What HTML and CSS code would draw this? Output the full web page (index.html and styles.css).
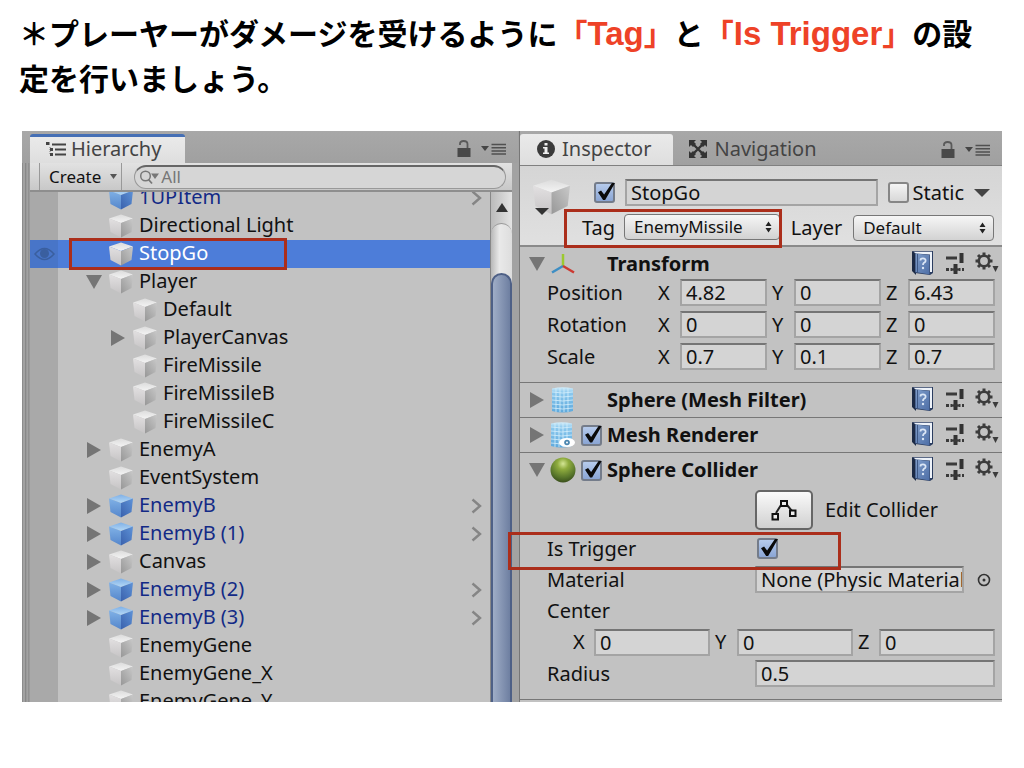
FILE: index.html
```html
<!DOCTYPE html>
<html lang="ja">
<head>
    <meta charset="UTF-8">
    <title>Tag / Is Trigger</title>
    <link rel="stylesheet" href="styles.css">
</head>
<body>
    <svg class="defs" width="0" height="0" aria-hidden="true">
        <defs>
            <linearGradient id="gTop" x1="0" y1="0" x2="0" y2="1"><stop offset="0" stop-color="#dcdcdc"/><stop offset="1" stop-color="#f4f4f4"/></linearGradient>
            <linearGradient id="gLeft" x1="0" y1="0" x2="0" y2="1"><stop offset="0" stop-color="#e2e0e1"/><stop offset="1" stop-color="#c6c4c5"/></linearGradient>
            <linearGradient id="gRight" x1="1" y1="0" x2="0" y2="1"><stop offset="0" stop-color="#c9c9c9"/><stop offset="1" stop-color="#979797"/></linearGradient>
            <linearGradient id="bTop" x1="0" y1="0" x2="0" y2="1"><stop offset="0" stop-color="#7fb0e6"/><stop offset="1" stop-color="#b4d8f6"/></linearGradient>
            <linearGradient id="bLeft" x1="0" y1="0" x2="0" y2="1"><stop offset="0" stop-color="#80b1e6"/><stop offset="1" stop-color="#5586cb"/></linearGradient>
            <linearGradient id="bRight" x1="1" y1="0" x2="0" y2="1"><stop offset="0" stop-color="#5e93d8"/><stop offset="1" stop-color="#3a61ac"/></linearGradient>
            <linearGradient id="gMesh" x1="0" y1="0" x2="0" y2="1"><stop offset="0" stop-color="#d2ecf9"/><stop offset=".2" stop-color="#8cc9ee"/><stop offset="1" stop-color="#5fa9dc"/></linearGradient>
            <linearGradient id="gBook" x1="0" y1="0" x2="1" y2="1"><stop offset="0" stop-color="#7f9dca"/><stop offset="1" stop-color="#4d6ea6"/></linearGradient>
            <radialGradient id="gBall" cx=".5" cy=".25" r=".75"><stop offset="0" stop-color="#d4e695"/><stop offset=".3" stop-color="#8fac3e"/><stop offset=".75" stop-color="#56742a"/><stop offset="1" stop-color="#3a4f1c"/></radialGradient>
        </defs>
        <symbol id="cube" viewBox="0 0 24 24">
            <path d="M0 4.500 12 0.500 24 4.500 12 9z" fill="url(#gTop)"/>
            <path d="M0 4.500 12 9V23.500L1.500 18z" fill="url(#gLeft)"/>
            <path d="M24 4.500 12 9V23.500L22.500 18z" fill="url(#gRight)"/>
        </symbol>
        <symbol id="prefab" viewBox="0 0 24 24">
            <path d="M0 4.500 12 0.500 24 4.500 12 9z" fill="url(#bTop)"/>
            <path d="M0 4.500 12 9V23.500L1.500 18z" fill="url(#bLeft)"/>
            <path d="M24 4.500 12 9V23.500L22.500 18z" fill="url(#bRight)"/>
        </symbol>
        <symbol id="closed" viewBox="0 0 14 16"><path d="M0 0 14 8 0 16z" fill="#757575"/></symbol>
        <symbol id="opened" viewBox="0 0 16 14"><path d="M0 0H16L8 14z" fill="#757575"/></symbol>
        <symbol id="chevron" viewBox="0 0 11 16"><path d="M1.500 1.500 9 8 1.500 14.500" fill="none" stroke="#858585" stroke-width="2.400"/></symbol>
        <symbol id="lock" viewBox="0 0 14 17">
            <path d="M0.500 8H13.500V17H0.500z" fill="#494949"/>
            <path d="M3 5V3.500Q3 1 6.500 1Q10.500 1 10.500 4V8" fill="none" stroke="#5a5a5a" stroke-width="1.800"/>
        </symbol>
        <symbol id="menu" viewBox="0 0 25 12">
            <path d="M0 3H8L4 8z" fill="#454545"/>
            <path d="M10.500 1.500H25M10.500 4.800H25M10.500 8H25M10.500 11H25" stroke="#505050" stroke-width="1.500"/>
        </symbol>
        <symbol id="updown" viewBox="0 0 7 12"><path d="M0.500 5 3.500 0.500 6.500 5zM0.500 7H6.500L3.500 11.500z" fill="#222"/></symbol>
        <symbol id="mesh" viewBox="0 0 22 26">
            <path d="M0 1.500Q11 -1 21 1.500V24Q11 27 0 24z" fill="url(#gMesh)"/>
            <path d="M4 1V25M8 1V25M12 1V25M16 1V25M0 5Q11 7 21 5M0 9Q11 11 21 9M0 13Q11 15 21 13M0 17Q11 19 21 17M0 21Q11 23 21 21" fill="none" stroke="#d5effb" stroke-width=".8"/>
        </symbol>
        <symbol id="book" viewBox="0 0 24 26">
            <path d="M1 1 5 3V25L1 21z" fill="#1c2a45"/>
            <path d="M1.500 1H22V23L19 25 4 23V4z" fill="#2b3d60"/>
            <path d="M2.500 1.800H21V22H19V4.500L5 3.500z" fill="#eef3fa"/>
            <path d="M4.500 3.500 18.500 5V24.500L4.500 22z" fill="url(#gBook)"/>
            <path d="M6.500 4V22" stroke="#3d5784" stroke-width="1"/>
            <path d="M9.500 10.500Q9.500 8.200 12 8.300 14.800 8.500 14.600 10.800 14.500 12 13 12.800 12 13.500 12 15" fill="none" stroke="#dbe6f5" stroke-width="1.800"/>
            <circle cx="12" cy="18" r="1.200" fill="#dbe6f5"/>
        </symbol>
        <symbol id="preset" viewBox="0 0 18 22">
            <path d="M0 6H11M0 17.500H3M4.500 17.500H6M13 17.500H14.500M16 17.500H18" stroke="#3a3a3a" stroke-width="2.800"/>
            <path d="M13.500 1H17.500V11H13.500zM7.500 12H11.500V22H7.500z" fill="#333"/>
            <path d="M5 17.500H13" stroke="#3a3a3a" stroke-width="2.400"/>
        </symbol>
        <symbol id="gear" viewBox="0 0 24 22">
            <circle cx="9" cy="9" r="5.200" fill="none" stroke="#3c3c3c" stroke-width="2.600"/>
            <path d="M9 .5V4M9 14V17.500M.5 9H4M14 9H17.500M3 3 5.500 5.500M12.500 12.500 15 15M15 3 12.500 5.500M5.500 12.500 3 15" stroke="#3c3c3c" stroke-width="3"/>
            <path d="M17.500 14H23.500L20.500 20z" fill="#3c3c3c"/>
        </symbol>
    </svg>

    <main class="slide">
        <h1>＊プレーヤーがダメージを受けるように<em>「<span>Tag</span>」</em>と<em>「<span>Is Trigger</span>」</em>の設定を行いましょう。</h1>

        <div class="editor">
            <section class="hierarchy">
                <header class="tab-bar">
                    <h2 class="tab tab-focus">
                        <svg class="list-icon" width="20" height="15" viewBox="0 0 20 15"><path d="M6 2.500H20M9 7.500H20M9 12.500H20" stroke="#444" stroke-width="2"/><path d="M4 5V13" stroke="#777" stroke-width="1" stroke-dasharray="1 1"/><path d="M0 0H3.500V3H0zM4 6H7V9H4zM4 11H7V14H4z" fill="#444"/></svg>
                        Hierarchy
                    </h2>
                    <div class="tab-tools">
                        <svg width="14" height="17"><use href="#lock"/></svg>
                        <svg width="25" height="12"><use href="#menu"/></svg>
                    </div>
                </header>
                <div class="toolbar">
                    <button class="create" type="button">Create <svg width="7" height="5" viewBox="0 0 7 5"><path d="M0 0H7L3.500 5z" fill="#555"/></svg></button>
                    <label class="search">
                        <svg width="22" height="16" viewBox="0 0 22 16"><circle cx="6.500" cy="7" r="4.800" fill="none" stroke="#777" stroke-width="1.500"/><path d="M9.500 10.500 13 14.500" stroke="#777" stroke-width="1.800"/><path d="M12 4.500H20L16 10z" fill="#777"/></svg>
                        <input type="text" aria-label="Search" placeholder="All">
                    </label>
                </div>
                <div class="tree-area">
                    <ul class="tree">
                        <li class="prefab"><i></i><svg class="cube"><use href="#prefab"/></svg><span>1UPItem</span><svg class="chevron"><use href="#chevron"/></svg></li>
                        <li><i></i><svg class="cube"><use href="#cube"/></svg><span>Directional Light</span></li>
                        <li class="selected"><svg class="eye" width="21" height="14" viewBox="0 0 21 14"><path d="M1 7Q10.500 -4 20 7Q10.500 18 1 7z" fill="none" stroke="#3a5f9f" stroke-width="1.500"/><circle cx="10.500" cy="6.500" r="4.500" fill="#3a5f9f"/></svg><i></i><svg class="cube"><use href="#cube"/></svg><span>StopGo</span></li>
                        <li><i><svg width="16" height="14"><use href="#opened"/></svg></i><svg class="cube"><use href="#cube"/></svg><span>Player</span></li>
                        <li class="child"><i></i><svg class="cube"><use href="#cube"/></svg><span>Default</span></li>
                        <li class="child"><i><svg width="14" height="16"><use href="#closed"/></svg></i><svg class="cube"><use href="#cube"/></svg><span>PlayerCanvas</span></li>
                        <li class="child"><i></i><svg class="cube"><use href="#cube"/></svg><span>FireMissile</span></li>
                        <li class="child"><i></i><svg class="cube"><use href="#cube"/></svg><span>FireMissileB</span></li>
                        <li class="child"><i></i><svg class="cube"><use href="#cube"/></svg><span>FireMissileC</span></li>
                        <li><i><svg width="14" height="16"><use href="#closed"/></svg></i><svg class="cube"><use href="#cube"/></svg><span>EnemyA</span></li>
                        <li><i></i><svg class="cube"><use href="#cube"/></svg><span>EventSystem</span></li>
                        <li class="prefab"><i><svg width="14" height="16"><use href="#closed"/></svg></i><svg class="cube"><use href="#prefab"/></svg><span>EnemyB</span><svg class="chevron"><use href="#chevron"/></svg></li>
                        <li class="prefab"><i><svg width="14" height="16"><use href="#closed"/></svg></i><svg class="cube"><use href="#prefab"/></svg><span>EnemyB (1)</span><svg class="chevron"><use href="#chevron"/></svg></li>
                        <li><i><svg width="14" height="16"><use href="#closed"/></svg></i><svg class="cube"><use href="#cube"/></svg><span>Canvas</span></li>
                        <li class="prefab"><i><svg width="14" height="16"><use href="#closed"/></svg></i><svg class="cube"><use href="#prefab"/></svg><span>EnemyB (2)</span><svg class="chevron"><use href="#chevron"/></svg></li>
                        <li class="prefab"><i><svg width="14" height="16"><use href="#closed"/></svg></i><svg class="cube"><use href="#prefab"/></svg><span>EnemyB (3)</span><svg class="chevron"><use href="#chevron"/></svg></li>
                        <li><i></i><svg class="cube"><use href="#cube"/></svg><span>EnemyGene</span></li>
                        <li><i></i><svg class="cube"><use href="#cube"/></svg><span>EnemyGene_X</span></li>
                        <li><i></i><svg class="cube"><use href="#cube"/></svg><span>EnemyGene_Y</span></li>
                    </ul>
                    <div class="scrollbar">
                        <svg class="scroll-up" width="12" height="9" viewBox="0 0 12 9"><path d="M0 9 6 0 12 9z" fill="#333"/></svg>
                        <div class="track"><div class="thumb"></div></div>
                    </div>
                </div>
            </section>

            <section class="inspector">
                <header class="tab-bar">
                    <h2 class="tab">
                        <svg width="18" height="18" viewBox="0 0 18 18"><circle cx="9" cy="9" r="9" fill="#3a3a3a"/><path d="M7.500 3H10.500V5.500H7.500zM6 7H10.500V12.500H12V14H6V12.500H7.500V8.500H6z" fill="#eee"/></svg>
                        Inspector
                    </h2>
                    <h2 class="tab tab-off">
                        <svg width="18" height="18" viewBox="0 0 18 18"><path d="M3 3 15 15M15 3 3 15" stroke="#333" stroke-width="2.400"/><path d="M0 0H7L5 2 7 4 4 7 2 5 0 7zM18 0H11L13 2 11 4 14 7 16 5 18 7zM0 18H7L5 16 7 14 4 11 2 13 0 11zM18 18H11L13 16 11 14 14 11 16 13 18 11z" fill="#333"/></svg>
                        Navigation
                    </h2>
                    <div class="tab-tools">
                        <svg width="14" height="17"><use href="#lock"/></svg>
                        <svg width="25" height="12"><use href="#menu"/></svg>
                    </div>
                </header>

                <div class="object-head">
                    <div class="object-icon">
                        <svg width="37" height="36" viewBox="0 0 24 24" preserveAspectRatio="none"><use href="#cube"/></svg>
                        <svg class="object-arrow" width="14" height="7" viewBox="0 0 14 7"><path d="M0 0H14L7 7z" fill="#333"/></svg>
                    </div>
                    <div class="object-fields">
                        <div class="object-row name-row">
                            <input type="checkbox" aria-label="Active" checked>
                            <input class="field" type="text" aria-label="Name" value="StopGo">
                            <label><input type="checkbox"> Static</label>
                            <svg width="16" height="8" viewBox="0 0 16 8"><path d="M0 0H16L8 8z" fill="#444"/></svg>
                        </div>
                        <div class="object-row tag-row">
                            <div class="tag marked">
                                <label for="tag">Tag</label>
                                <div class="drop"><select id="tag"><option>EnemyMissile</option></select><svg width="7" height="12"><use href="#updown"/></svg></div>
                            </div>
                            <label for="layer">Layer</label>
                            <div class="drop"><select id="layer"><option>Default</option></select><svg width="7" height="12"><use href="#updown"/></svg></div>
                        </div>
                    </div>
                </div>

                <article class="component">
                    <header>
                        <svg class="fold" width="16" height="14"><use href="#opened"/></svg>
                        <svg class="kind" width="24" height="22" viewBox="0 0 24 22"><path d="M12 13V1" stroke="#9cc92f" stroke-width="2.500"/><path d="M12 13 1 19.500" stroke="#3d8ec4" stroke-width="2.500"/><path d="M12 13 23 19.500" stroke="#cc3a32" stroke-width="2.500"/></svg>
                        <h3>Transform</h3>
                        <div class="tools">
                            <svg width="24" height="26"><use href="#book"/></svg>
                            <svg width="18" height="22"><use href="#preset"/></svg>
                            <svg width="24" height="22"><use href="#gear"/></svg>
                        </div>
                    </header>
                    <div class="props transform">
                        <div class="prop"><span class="name">Position</span>
                            <div class="xyz"><label for="px">X</label><input class="field" id="px" value="4.82"><label for="py">Y</label><input class="field" id="py" value="0"><label for="pz">Z</label><input class="field" id="pz" value="6.43"></div></div>
                        <div class="prop"><span class="name">Rotation</span>
                            <div class="xyz"><label for="rx">X</label><input class="field" id="rx" value="0"><label for="ry">Y</label><input class="field" id="ry" value="0"><label for="rz">Z</label><input class="field" id="rz" value="0"></div></div>
                        <div class="prop"><span class="name">Scale</span>
                            <div class="xyz"><label for="sx">X</label><input class="field" id="sx" value="0.7"><label for="sy">Y</label><input class="field" id="sy" value="0.1"><label for="sz">Z</label><input class="field" id="sz" value="0.7"></div></div>
                    </div>
                </article>

                <article class="component">
                    <header>
                        <svg class="fold" width="14" height="16"><use href="#closed"/></svg>
                        <svg class="kind" width="22" height="26"><use href="#mesh"/></svg>
                        <h3>Sphere (Mesh Filter)</h3>
                        <div class="tools">
                            <svg width="24" height="26"><use href="#book"/></svg>
                            <svg width="18" height="22"><use href="#preset"/></svg>
                            <svg width="24" height="22"><use href="#gear"/></svg>
                        </div>
                    </header>
                </article>

                <article class="component">
                    <header>
                        <svg class="fold" width="14" height="16"><use href="#closed"/></svg>
                        <svg class="kind" width="24" height="26" viewBox="0 0 24 26"><use href="#mesh" width="22" height="26"/><ellipse cx="16" cy="20.500" rx="8" ry="4.500" fill="#fff"/><circle cx="16" cy="20.500" r="2.800" fill="#4c87b0"/><circle cx="16" cy="20.500" r="1" fill="#fff"/></svg>
                        <input type="checkbox" id="renderer" checked>
                        <h3><label for="renderer">Mesh Renderer</label></h3>
                        <div class="tools">
                            <svg width="24" height="26"><use href="#book"/></svg>
                            <svg width="18" height="22"><use href="#preset"/></svg>
                            <svg width="24" height="22"><use href="#gear"/></svg>
                        </div>
                    </header>
                </article>

                <article class="component">
                    <header>
                        <svg class="fold" width="16" height="14"><use href="#opened"/></svg>
                        <svg class="kind" width="26" height="26" viewBox="0 0 26 26"><circle cx="13" cy="13" r="12.500" fill="url(#gBall)"/></svg>
                        <input type="checkbox" id="collider" checked>
                        <h3><label for="collider">Sphere Collider</label></h3>
                        <div class="tools">
                            <svg width="24" height="26"><use href="#book"/></svg>
                            <svg width="18" height="22"><use href="#preset"/></svg>
                            <svg width="24" height="22"><use href="#gear"/></svg>
                        </div>
                    </header>
                    <div class="props collider">
                        <div class="prop edit-row">
                            <span class="name"></span>
                            <button class="edit" id="edit" type="button" aria-label="Edit Collider"><svg width="26" height="22" viewBox="0 0 26 22"><path d="M5 14 10 6M16 6 21 12" stroke="#222" stroke-width="2"/><path d="M1.500 15H7V20.500H1.500zM10 2H16V7H10zM19 11.500H24.500V17H19z" fill="#eee" stroke="#111" stroke-width="2"/></svg></button>
                            <label for="edit">Edit Collider</label>
                        </div>
                        <div class="prop trigger-row marked">
                            <label class="name" for="trigger">Is Trigger</label>
                            <input type="checkbox" id="trigger" checked>
                        </div>
                        <div class="prop">
                            <label class="name" for="material">Material</label>
                            <input class="field" id="material" value="None (Physic Material)">
                            <svg class="picker" width="14" height="14" viewBox="0 0 14 14"><circle cx="7" cy="7" r="5.500" fill="none" stroke="#333" stroke-width="1.600"/><circle cx="7" cy="7" r="1.500" fill="#333"/></svg>
                        </div>
                        <div class="prop"><span class="name">Center</span></div>
                        <div class="xyz"><label for="cx">X</label><input class="field" id="cx" value="0"><label for="cy">Y</label><input class="field" id="cy" value="0"><label for="cz">Z</label><input class="field" id="cz" value="0"></div>
                        <div class="prop">
                            <label class="name" for="radius">Radius</label>
                            <input class="field" id="radius" value="0.5">
                        </div>
                    </div>
                </article>
                <div class="end"></div>
            </section>
        </div>
    </main>
</body>
</html>
```
FILE: styles.css
```css
* {
    box-sizing: border-box;
}

body {
    margin: 0;
    background: #fff;
    color: #111;
    font: 20px/28px "Noto Sans", "Noto Sans CJK JP", sans-serif;
}

.defs {
    position: absolute;
}

svg {
    flex: none;
}

.slide {
    padding: 10px 22px 40px;
}

h1 {
    margin: 0 0 31px -3px;
    color: #000;
    font: bold 30px/45px "Noto Sans CJK JP", sans-serif;
}

h1 em {
    color: #ee4227;
    font-style: normal;
}

h1 em span {
    font-family: "Liberation Sans", sans-serif;
    font-size: 33px;
    line-height: 30px;
}

h2, h3 {
    margin: 0;
    font-size: 20px;
    line-height: 28px;
}

input, select, button {
    margin: 0;
    font: inherit;
    color: inherit;
}

.editor {
    display: grid;
    grid-template-columns: minmax(0, 498fr) minmax(0, 482fr);
    background: #a2a2a2;
}

/* tabs */
.tab-bar {
    display: flex;
    height: 34px;
    padding-top: 3px;
    background: linear-gradient(#a8a8a8, #a0a0a0);
}

.tab {
    display: flex;
    align-items: center;
    gap: 7px;
    padding: 0 22px 2px 17px;
    border-radius: 3px 3px 0 0;
    background: linear-gradient(#eaeaea, #dedede);
    color: #444;
    font-weight: normal;
}

.tab-focus {
    padding-left: 16px;
    padding-right: 24px;
    border-top: 3px solid #456fb5;
    gap: 5px;
}

.tab-off {
    padding-left: 16px;
    background: none;
}

.tab-tools {
    display: flex;
    align-items: center;
    gap: 10px;
    margin-left: auto;
    padding-right: 12px;
}

/* hierarchy */
.hierarchy {
    display: flex;
    flex-direction: column;
    min-height: 0;
    padding: 0 7px 0 8px;
    background: linear-gradient(to right, #8c8c8c 1px, #a2a2a2 1px, #a2a2a2 3px, #808080 3px, #a2a2a2 5px, #a2a2a2 6px, #808080 7px, #b4b4b4 8px, #a2a2a2 8px);
    border-right: 1px solid #777;
}

.hierarchy .tab-bar {
    height: 32px;
    margin: 0 -6px 0 -8px;
    padding-left: 8px;
}

.toolbar {
    display: flex;
    align-items: center;
    height: 29px;
    padding: 0 6px 0 9px;
    border-bottom: 2px solid #8e8e8e;
    background: linear-gradient(#e2e2e2, #c8c8c8);
}

.create {
    display: flex;
    align-items: center;
    gap: 9px;
    height: 27px;
    padding: 0 4px 0 9px;
    border: solid #999;
    border-width: 0 1px;
    background: none;
    font-size: 17px;
}

.search {
    display: flex;
    flex: 1;
    align-items: center;
    min-width: 0;
    height: 24px;
    margin-left: 12px;
    padding-left: 4px;
    border: 1px solid #999;
    border-top: 2px solid #666;
    border-radius: 12px;
    background: #d6d6d6;
}

.search input {
    flex: 1;
    min-width: 0;
    padding: 0;
    border: 0;
    background: none;
    font-size: 17px;
    line-height: 20px;
}

.search input::placeholder {
    color: #777;
}

.tree-area {
    display: flex;
    flex: 1 1 0;
    min-height: 0;
    overflow: hidden;
    background: #c2c2c2;
}

.tree {
    flex: 1;
    min-width: 0;
    height: 0;
    min-height: 100%;
    margin: 0;
    padding: 0;
    list-style: none;
    background: linear-gradient(to right, #a9a9a9 28px, #c2c2c2 28px);
    overflow: hidden;
}

.tree li {
    position: relative;
    display: flex;
    align-items: center;
    height: 28px;
    padding: 0 8px 0 55px;
}

.tree li:first-child {
    margin-top: -8px;
}

.tree .child {
    padding-left: 79px;
}

.tree i {
    display: flex;
    justify-content: center;
    width: 18px;
    margin-right: 6px;
}

.tree span {
    padding-bottom: 2px;
}

.cube {
    width: 24px;
    height: 24px;
    margin-right: 6px;
}

.tree .prefab {
    color: #132a86;
}

.chevron {
    width: 11px;
    height: 16px;
    margin-left: auto;
}

.tree .selected {
    background: linear-gradient(to right, #4875c8 28px, #4d7dd9 28px);
    color: #fff;
}

.eye {
    position: absolute;
    left: 4px;
}

/* red frames drawn over the editor */
.selected::after,
.marked::after {
    content: "";
    position: absolute;
    border: 3px solid #ab2e1b;
    pointer-events: none;
}

.selected::after {
    top: -2px;
    bottom: -2px;
    left: 39px;
    width: 212px;
}

.scrollbar {
    display: flex;
    flex-direction: column;
    align-items: center;
    width: 22px;
    border-left: 1px solid #888;
    background: linear-gradient(to right, #bbb, #e4e4e4);
}

.scroll-up {
    margin: 11px 0;
}

.track {
    flex: 1;
    width: 100%;
    padding-top: 49px;
    border-radius: 11px 11px 0 0;
    border-top: 1px solid #999;
    background: linear-gradient(to right, #b8b8b8, #e9e9e9 40%, #ddd);
}

.thumb {
    height: 100%;
    border: 2px solid #4e6086;
    border-bottom: 0;
    border-radius: 11px 11px 0 0;
    background: linear-gradient(to right, #9fadc6, #6e7fa1);
}

/* inspector */
.inspector {
    background: #c2c2c2;
}

.object-head {
    display: flex;
    height: 82px;
    padding: 13px 8px 0 13px;
    border-top: 1px solid #808080;
    border-bottom: 2px solid #8a8a8a;
    background: linear-gradient(#d5d5d5, #e0e0e0);
}

.object-icon {
    position: relative;
    width: 49px;
}

.object-arrow {
    position: absolute;
    left: 2px;
    top: 29px;
}

.object-fields {
    flex: 1;
    min-width: 0;
}

.object-row {
    display: flex;
    align-items: center;
    height: 27px;
}

.name-row {
    gap: 10px;
    margin-bottom: 8px;
    padding: 0 4px 0 12px;
}

.name-row .field {
    flex: 1;
}

.name-row label {
    display: flex;
    gap: 4px;
    align-items: center;
}

.tag,
.tag-row {
    display: grid;
    grid-template-columns: minmax(0, 198fr) auto minmax(0, 141fr);
    gap: 11px;
}

.tag {
    position: relative;
    grid-template-columns: auto minmax(0, 1fr);
    gap: 9px;
}

.tag.marked::after {
    inset: -5px -2px -6px -18px;
}

.drop {
    position: relative;
}

.drop select {
    display: block;
    appearance: none;
    width: 100%;
    height: 26px;
    padding: 0 20px 0 9px;
    border: 1px solid #777;
    border-radius: 4px;
    background: linear-gradient(#f6f6f6, #d2d2d2);
    font-size: 17px;
    line-height: 24px;
}

.drop svg {
    position: absolute;
    right: 8px;
    top: 7px;
}

.field {
    min-width: 0;
    width: 100%;
    height: 27px;
    padding: 0 0 0 4px;
    border: 2px solid #a4a4a4;
    border-top-color: #757575;
    background: #d4d4d4;
    line-height: 23px;
}

input[type="checkbox"] {
    position: relative;
    flex: none;
    appearance: none;
    width: 21px;
    height: 21px;
    border: 2px solid #868686;
    border-radius: 3px;
    background: linear-gradient(#f4f4f4, #d8d8d8);
}

input[type="checkbox"]:checked {
    border-color: #747c8a;
    background: linear-gradient(#b6cbec, #8aa5d4);
}

input[type="checkbox"]:checked::after {
    content: "";
    position: absolute;
    left: 2px;
    top: -1px;
    width: 17px;
    height: 17px;
    background: #0a0a0a;
    clip-path: polygon(0 55%, 18% 44%, 36% 68%, 82% 0, 100% 0, 42% 100%, 30% 100%);
}

.component {
    border-bottom: 1px solid #777;
}

.component header {
    display: grid;
    grid-template-columns: 16px 26px 21px minmax(0, 1fr) auto;
    column-gap: 5px;
    align-items: center;
    height: 34px;
    padding: 0 3px 0 9px;
}

.component .fold,
.component .kind {
    justify-self: center;
}

.component h3 {
    grid-column: 4;
    white-space: nowrap;
}

.tools {
    display: flex;
    align-items: center;
    gap: 11px;
    padding-bottom: 2px;
}

.props {
    display: grid;
    row-gap: 4px;
    padding: 0 7px 12px 27px;
}

.transform {
    row-gap: 5px;
    margin-top: -2px;
}

.prop {
    position: relative;
    display: flex;
    align-items: center;
    height: 27px;
}

.prop .name {
    flex: 0 0 208px;
}

.transform .name {
    flex-basis: 111px;
}

.xyz {
    display: grid;
    flex: 1;
    align-items: center;
}

.xyz label:not(:first-child) {
    padding-left: 5px;
}

.transform .xyz {
    grid-template-columns: 22px minmax(0, 1fr) 27px minmax(0, 1fr) 27px minmax(0, 1fr);
}

.collider .xyz {
    grid-template-columns: 21px minmax(0, 1fr) 27px minmax(0, 1fr) 26px minmax(0, 1fr);
    margin-left: 26px;
}

.collider .edit-row {
    height: 43px;
    margin-top: 1px;
}

.edit {
    display: flex;
    align-items: center;
    justify-content: center;
    width: 58px;
    height: 40px;
    margin-right: 12px;
    border: 2px solid #666;
    border-radius: 5px;
    background: linear-gradient(#fafafa, #d0d0d0);
}

.trigger-row.marked::after {
    z-index: 1;
    top: -3px;
    bottom: -8px;
    left: -39px;
    right: 154px;
}

.trigger-row input {
    margin-left: 2px;
}

.picker {
    margin: 0 4px 0 13px;
}

.end {
    height: 2px;
}
```
